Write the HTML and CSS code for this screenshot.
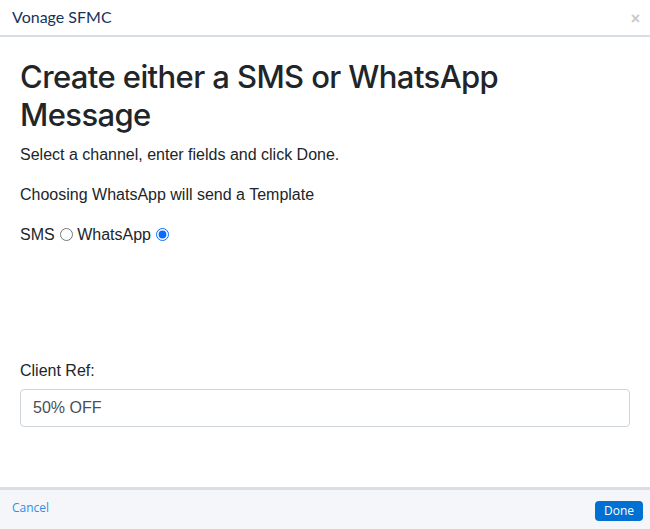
FILE: index.html
```html
<!DOCTYPE html>
<html lang="en">
<head>
<meta charset="utf-8">
<title>Vonage SFMC</title>
<link rel="stylesheet" href="styles.css">
</head>
<body>
<div class="app">
  <header class="modal-header">
    <span class="title">Vonage SFMC</span>
    <span class="close">×</span>
  </header>
  <main class="content">
    <h2 class="heading">Create either a SMS or WhatsApp Message</h2>
    <p class="text">Select a channel, enter fields and click Done.</p>
    <p class="text">Choosing WhatsApp will send a Template</p>
    <div class="channels">
      <label class="channel">SMS <input type="radio" name="ch" value="sms"></label>
      <label class="channel">WhatsApp <input type="radio" name="ch" value="wa" checked></label>
    </div>
    <div class="field">
      <label class="field-label" for="ref">Client Ref:</label>
      <input class="form-control" id="ref" type="text" value="50% OFF">
    </div>
  </main>
  <footer class="modal-footer">
    <a class="cancel" href="#">Cancel</a>
    <button class="done" type="button">Done</button>
  </footer>
</div>
</body>
</html>
```
FILE: styles.css
```css
* { box-sizing: border-box; }
html, body { margin: 0; padding: 0; }
body {
  font-family: "Liberation Sans", Arial, sans-serif;
  color: #212529;
  background: #fff;
}
.app {
  width: 650px;
  height: 529px;
  display: flex;
  flex-direction: column;
}
.modal-header {
  height: 37px;
  flex: none;
  display: flex;
  align-items: center;
  justify-content: space-between;
  padding: 0 10px 2px 12px;
  border-bottom: 2px solid #d8dde6;
}
.title {
  font-family: Lato, "Open Sans", sans-serif;
  font-size: 16px;
  color: #16325c;
}
.close {
  font-family: "Liberation Sans", Arial, sans-serif;
  font-size: 16px;
  color: #c9c9c9;
  font-weight: bold;
  margin-top: 4px;
}
.content {
  flex: 1;
  padding: 21px 20px 0 20px;
}
.heading {
  font-family: Inter, "Liberation Sans", sans-serif;
  font-size: 31px;
  font-weight: 500;
  letter-spacing: -0.6px;
  line-height: 38.4px;
  margin: 0 0 8px 0;
  color: #212529;
}
.text {
  font-size: 16px;
  line-height: 24px;
  margin: 0 0 16px 0;
}
.channels {
  font-size: 16px;
  line-height: 24px;
  display: flex;
  gap: 4px;
}
.channel input {
  margin: 0 0 0 1px;
  width: 13px;
  height: 13px;
  accent-color: #0a6cff;
  vertical-align: -1px;
}
.field {
  margin-top: 112px;
}
.field-label {
  display: block;
  font-size: 16px;
  line-height: 24px;
  margin-bottom: 6px;
}
.form-control {
  display: block;
  width: 100%;
  height: 38px;
  padding: 6px 12px;
  font-family: "Liberation Sans", Arial, sans-serif;
  font-size: 16px;
  color: #495057;
  border: 1px solid #ced4da;
  border-radius: 4px;
  background: #fff;
}
.modal-footer {
  height: 42px;
  flex: none;
  display: flex;
  align-items: center;
  justify-content: space-between;
  padding: 0 7px 0 12px;
  border-top: 3px solid #d8dde6;
  background: #f4f6f9;
}
.cancel {
  font-family: "Open Sans", sans-serif;
  font-size: 12px;
  color: #2f8ee5;
  text-decoration: none;
  margin-top: -4px;
}
.done {
  font-family: "Open Sans", sans-serif;
  font-size: 12px;
  color: #fff;
  background: #0070d2;
  border: 0;
  border-radius: 4px;
  width: 48px;
  height: 20px;
  padding: 0;
  margin-top: 2px;
}
```
